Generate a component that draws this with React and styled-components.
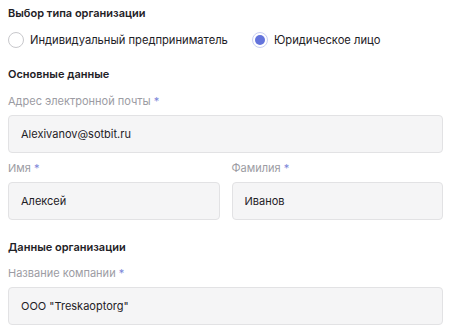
import React from "react";
import styled, { createGlobalStyle } from "styled-components";

const Global = createGlobalStyle`
  html, body { margin: 0; padding: 0; background: #ffffff; }
  body { font-family: Inter, "Noto Sans", sans-serif; }
`;

const Form = styled.div`
  width: 435px;
  padding: 5px 11px 0 8px;
  display: flex;
  flex-direction: column;
`;

const Heading = styled.div`
  font-size: 11px;
  font-weight: 600;
  line-height: 16px;
  color: #1e2126;
  margin-top: ${(p) => p.$mt || 0}px;
`;

const RadioRow = styled.div`
  display: flex;
  align-items: center;
  height: 16px;
  margin-top: 11px;
`;

const RadioItem = styled.label`
  display: flex;
  align-items: center;
  gap: 6px;
  font-size: 11.2px;
  color: #1e2126;
  width: ${(p) => p.$w || "auto"};
`;

const Circle = styled.span`
  box-sizing: border-box;
  flex: none;
  width: 16px;
  height: 16px;
  border-radius: 50%;
  border: 1px solid ${(p) => (p.$checked ? "#c9cff3" : "#c8c8cc")};
  display: flex;
  align-items: center;
  justify-content: center;
  background: #fff;
  &::after {
    content: "";
    display: ${(p) => (p.$checked ? "block" : "none")};
    width: 10px;
    height: 10px;
    border-radius: 50%;
    background: #6474dc;
  }
`;

const Field = styled.div`
  display: flex;
  flex-direction: column;
  gap: 6px;
  margin-top: ${(p) => p.$mt || 0}px;
`;

const Label = styled.div`
  font-size: 11px;
  line-height: 16px;
  color: #9c9ca3;
  span { color: #7a86d8; }
`;

const Input = styled.div`
  box-sizing: border-box;
  height: 38px;
  background: #f5f5f6;
  border: 1px solid #e2e2e4;
  border-radius: 4px;
  padding: 0 12px;
  display: flex;
  align-items: center;
  font-size: 11px;
  color: #1e2126;
`;

const Row = styled.div`
  display: grid;
  grid-template-columns: 1fr 1fr;
  column-gap: 12px;
  margin-top: ${(p) => p.$mt || 0}px;
`;

function TextField({ label, value, mt }) {
  return (
    <Field $mt={mt}>
      <Label>
        {label} <span>*</span>
      </Label>
      <Input>{value}</Input>
    </Field>
  );
}

export default function App() {
  return (
    <>
      <Global />
      <Form>
        <Heading>Выбор типа организации</Heading>
        <RadioRow>
          <RadioItem $w="244px">
            <Circle />
            Индивидуальный предприниматель
          </RadioItem>
          <RadioItem>
            <Circle $checked />
            Юридическое лицо
          </RadioItem>
        </RadioRow>
        <Heading $mt={18}>Основные данные</Heading>
        <TextField label="Адрес электронной почты" value="Alexivanov@sotbit.ru" mt={11} />
        <Row $mt={7}>
          <TextField label="Имя" value="Алексей" />
          <TextField label="Фамилия" value="Иванов" />
        </Row>
        <Heading $mt={19}>Данные организации</Heading>
        <TextField label="Название компании" value={'ООО "Treskaoptorg"'} mt={10} />
      </Form>
    </>
  );
}
